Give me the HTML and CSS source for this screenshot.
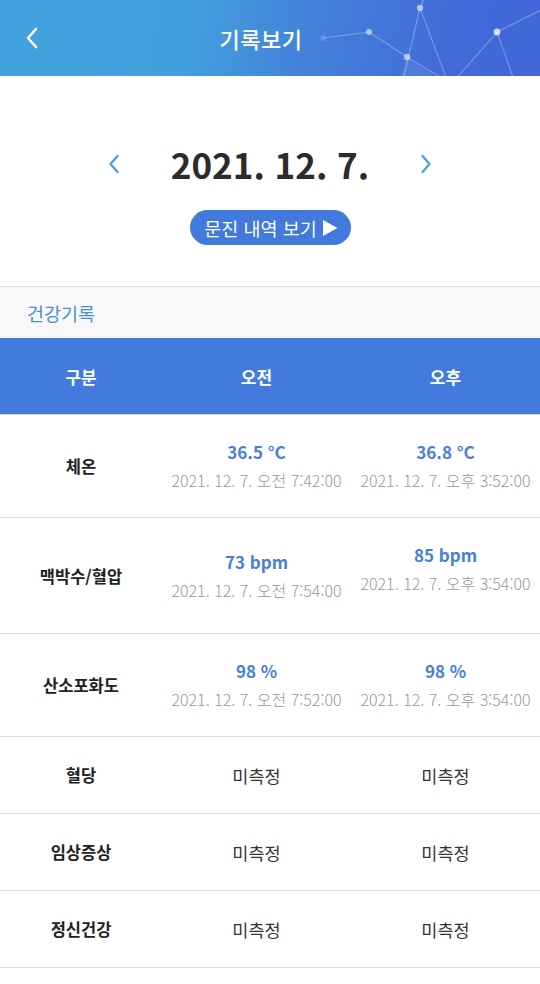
FILE: index.html
```html
<!DOCTYPE html>
<html lang="ko">
<head>
<meta charset="utf-8">
<title>기록보기</title>
<link rel="stylesheet" href="styles.css">
</head>
<body>
<div class="page">
  <header class="appbar">
    <svg class="appbar-deco" width="540" height="76" viewBox="0 0 540 76">
      <g stroke="rgba(255,255,255,0.28)" stroke-width="1.2" fill="none">
        <path d="M323 38 L369 32 L407 57 L445 80"/>
        <path d="M425 -4 L420 8 L403 80"/>
        <path d="M420 8 L447 80"/>
        <path d="M545 8 L497 32 L455 80"/>
        <path d="M497 32 L514 80"/>
      </g>
      <path d="M407 57 L400 80 L440 80 Z" fill="rgba(255,255,255,0.08)"/>
      <g fill="rgba(255,255,255,0.55)">
        <circle cx="369" cy="32" r="3"/>
        <circle cx="407" cy="57" r="3.2"/>
        <circle cx="420" cy="8" r="3.2"/>
        <circle cx="497" cy="32" r="3.4" fill="rgba(255,255,255,0.75)"/>
      </g>
      <circle cx="323" cy="38" r="3" fill="rgba(255,255,255,0.15)"/>
    </svg>
    <button class="back" aria-label="뒤로">
      <svg width="14" height="22" viewBox="0 0 14 22"><path d="M11 2 L3 11 L11 20" fill="none" stroke="#fff" stroke-width="2.6" stroke-linecap="round" stroke-linejoin="round"/></svg>
    </button>
    <h1 class="appbar-title">기록보기</h1>
  </header>

  <section class="datebox">
    <div class="date-nav">
      <button class="date-arrow" aria-label="이전">
        <svg width="14" height="22" viewBox="0 0 14 22"><path d="M10.5 3 L3.5 11 L10.5 19" fill="none" stroke="#4ba2db" stroke-width="2.4" stroke-linecap="round" stroke-linejoin="round"/></svg>
      </button>
      <div class="date-text">2021. 12. 7.</div>
      <button class="date-arrow" aria-label="다음">
        <svg width="14" height="22" viewBox="0 0 14 22"><path d="M3.5 3 L10.5 11 L3.5 19" fill="none" stroke="#4ba2db" stroke-width="2.4" stroke-linecap="round" stroke-linejoin="round"/></svg>
      </button>
    </div>
    <button class="history-btn">문진 내역 보기
      <svg width="16" height="18" viewBox="0 0 16 18"><path d="M1 1 L15.5 9 L1 17 Z" fill="#fff"/></svg>
    </button>
  </section>

  <div class="section-title">건강기록</div>

  <div class="table">
    <div class="row head">
      <div class="cell">구분</div>
      <div class="cell">오전</div>
      <div class="cell">오후</div>
    </div>
    <div class="row">
      <div class="cell label">체온</div>
      <div class="cell"><div class="val">36.5 °C</div><div class="time">2021. 12. 7. 오전 7:42:00</div></div>
      <div class="cell"><div class="val">36.8 °C</div><div class="time">2021. 12. 7. 오후 3:52:00</div></div>
    </div>
    <div class="row">
      <div class="cell label">맥박수/혈압</div>
      <div class="cell"><div class="val">73 bpm</div><div class="time">2021. 12. 7. 오전 7:54:00</div></div>
      <div class="cell"><div class="val">85 bpm</div><div class="time">2021. 12. 7. 오후 3:54:00</div><div class="extra"></div></div>
    </div>
    <div class="row">
      <div class="cell label">산소포화도</div>
      <div class="cell"><div class="val">98 %</div><div class="time">2021. 12. 7. 오전 7:52:00</div></div>
      <div class="cell"><div class="val">98 %</div><div class="time">2021. 12. 7. 오후 3:54:00</div></div>
    </div>
    <div class="row">
      <div class="cell label">혈당</div>
      <div class="cell none">미측정</div>
      <div class="cell none">미측정</div>
    </div>
    <div class="row">
      <div class="cell label">임상증상</div>
      <div class="cell none">미측정</div>
      <div class="cell none">미측정</div>
    </div>
    <div class="row">
      <div class="cell label">정신건강</div>
      <div class="cell none">미측정</div>
      <div class="cell none">미측정</div>
    </div>
  </div>
</div>
</body>
</html>
```

FILE: styles.css
```css
* { box-sizing: border-box; }
html, body {
  margin: 0;
  padding: 0;
  background: #fff;
}
body {
  font-family: "Noto Sans CJK KR", "Noto Sans", sans-serif;
  color: #222;
}
button {
  font-family: inherit;
  border: 0;
  background: none;
  padding: 0;
  cursor: pointer;
}

.page {
  width: 540px;
}

/* App bar */
.appbar {
  position: relative;
  height: 76px;
  display: flex;
  align-items: center;
  justify-content: center;
  padding-right: 18px;
  background: linear-gradient(100deg, #41a3de 0%, #429fdd 35%, #4480da 58%, #4169d8 85%, #4167d8 100%);
  overflow: hidden;
}
.appbar-deco {
  position: absolute;
  left: 0;
  top: 0;
}
.back {
  position: absolute;
  left: 25px;
  top: 26px;
  width: 20px;
  height: 24px;
  display: flex;
  align-items: center;
}
.appbar-title {
  position: relative;
  margin: 0;
  color: #fff;
  font-size: 22px;
  font-weight: 500;
  letter-spacing: 0.5px;
  line-height: 1;
}

/* Date */
.datebox {
  display: flex;
  flex-direction: column;
  align-items: center;
  padding: 66px 0 41px;
}
.date-nav {
  display: flex;
  align-items: center;
  gap: 50px;
}
.date-arrow {
  width: 14px;
  height: 22px;
  display: flex;
}
.date-text {
  font-size: 35px;
  font-weight: 700;
  color: #2b2b2b;
  line-height: 44px;
}
.history-btn {
  margin-top: 24px;
  height: 35px;
  width: 161px;
  padding: 0 0 0 2px;
  border-radius: 18px;
  background: #4179dc;
  color: #fff;
  font-size: 18.5px;
  display: flex;
  align-items: center;
  justify-content: center;
  gap: 5px;
}

/* Section title */
.section-title {
  border-top: 1px solid #dedede;
  background: #f8f8f8;
  height: 52px;
  padding-left: 27px;
  display: flex;
  align-items: center;
  color: #4a8ed2;
  font-size: 18.5px;
}

/* Table */
.row {
  display: grid;
  grid-template-columns: 30% 35% 35%;
  padding: 23px 0;
  border-bottom: 1px solid #dcdcdc;
}
.row.head {
  background: #437bdc;
  height: 77px;
  padding: 0;
  border-bottom: 1px solid #d8dde6;
}
.cell {
  display: flex;
  flex-direction: column;
  align-items: center;
  justify-content: center;
  text-align: center;
}
.row.head .cell {
  color: #fff;
  font-weight: 700;
  font-size: 17px;
}
.label {
  font-weight: 700;
  font-size: 16.5px;
  color: #222;
}
.val {
  color: #4a7fd3;
  font-weight: 700;
  font-size: 17px;
  line-height: 28px;
}
.time {
  color: #999;
  font-size: 16px;
  font-weight: 300;
  line-height: 28px;
  white-space: nowrap;
}
.extra {
  height: 13px;
}
.none {
  height: 30px;
  font-size: 17.5px;
  color: #333;
}
```
